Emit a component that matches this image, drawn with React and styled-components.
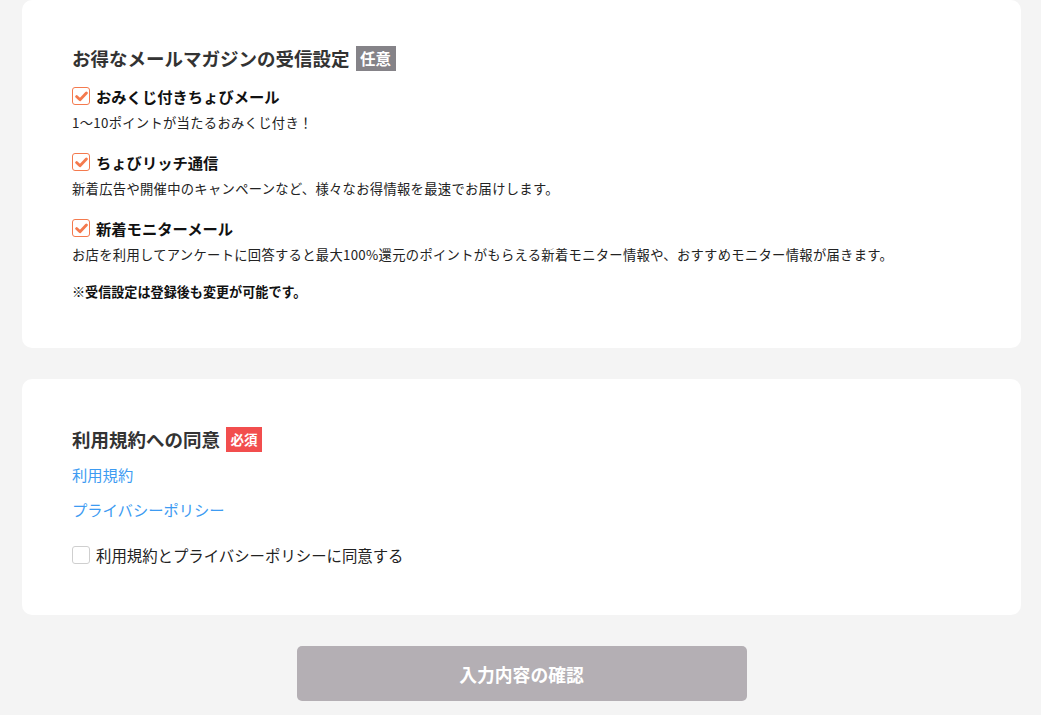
import React from 'react';
import styled, { createGlobalStyle } from 'styled-components';

const GlobalStyle = createGlobalStyle`
  body {
    margin: 0;
    background: #f4f4f4;
    font-family: "Noto Sans CJK JP", "Noto Sans", sans-serif;
    color: #222;
  }
`;

const mailItems = [
  { label: 'おみくじ付きちょびメール', desc: '1〜10ポイントが当たるおみくじ付き！' },
  { label: 'ちょびリッチ通信', desc: '新着広告や開催中のキャンペーンなど、様々なお得情報を最速でお届けします。' },
  {
    label: '新着モニターメール',
    desc: 'お店を利用してアンケートに回答すると最大100%還元のポイントがもらえる新着モニター情報や、おすすめモニター情報が届きます。',
  },
];

const CheckBox = ({ checked }) => (
  <Box $checked={checked}>
    {checked && (
      <svg width="13" height="11" viewBox="0 0 13 11">
        <path d="M1.6 5.6 L5 8.8 L11.4 2" fill="none" stroke="#f47a4e" strokeWidth="2.8" strokeLinecap="round" strokeLinejoin="round" />
      </svg>
    )}
  </Box>
);

const App = () => {
  return (
    <Page>
      <GlobalStyle />
      <Card $top={45} $bottom={46}>
        <Title>
          お得なメールマガジンの受信設定
          <Badge $color="#858388" $size={15.5}>任意</Badge>
        </Title>
        {mailItems.map((item, i) => (
          <Item key={i} $first={i === 0}>
            <CheckRow>
              <CheckBox checked />
              <ItemLabel>{item.label}</ItemLabel>
            </CheckRow>
            <Desc>{item.desc}</Desc>
          </Item>
        ))}
        <Note>※受信設定は登録後も変更が可能です。</Note>
      </Card>

      <Card $top={47} $bottom={51} $gap={31}>
        <Title>
          利用規約への同意
          <Badge $color="#f24e4e" $size={13.5}>必須</Badge>
        </Title>
        <Links>
          <LinkText href="#">利用規約</LinkText>
          <LinkText href="#">プライバシーポリシー</LinkText>
        </Links>
        <AgreeRow>
          <CheckBox checked={false} />
          <AgreeLabel>利用規約とプライバシーポリシーに同意する</AgreeLabel>
        </AgreeRow>
      </Card>

      <SubmitButton type="button">入力内容の確認</SubmitButton>
    </Page>
  );
};

const Page = styled.div`
  width: 999px;
  margin-left: 22px;
  padding-bottom: 15px;
  display: flex;
  flex-direction: column;
`;

const Card = styled.section`
  background: #fff;
  border-radius: 10px;
  margin-top: ${(p) => p.$gap || 0}px;
  padding: ${(p) => p.$top}px 50px ${(p) => p.$bottom}px;
`;

const Title = styled.h2`
  margin: 0;
  height: 26px;
  display: flex;
  align-items: center;
  font-size: 18.5px;
  font-weight: 700;
  color: #333;
  line-height: 26px;
`;

const Badge = styled.span`
  display: inline-flex;
  align-items: center;
  justify-content: center;
  height: 25px;
  padding: 0 4.5px;
  margin-left: 6px;
  background: ${(p) => p.$color};
  color: #fff;
  font-size: ${(p) => p.$size}px;
  font-weight: 700;
`;

const Item = styled.div`
  margin-top: ${(p) => (p.$first ? 16 : 20)}px;
`;

const CheckRow = styled.div`
  display: flex;
  align-items: center;
  height: 18px;
`;

const Box = styled.span`
  box-sizing: border-box;
  width: 18px;
  height: 18px;
  flex-shrink: 0;
  border-radius: 3px;
  border: 1.5px solid ${(p) => (p.$checked ? '#f47a4e' : '#cfcfcf')};
  background: #fff;
  display: flex;
  align-items: center;
  justify-content: center;
`;

const ItemLabel = styled.span`
  margin-left: 6px;
  font-size: 15.3px;
  font-weight: 700;
  color: #111;
`;

const Desc = styled.p`
  margin: 8px 0 0;
  font-size: 13.3px;
  letter-spacing: 0.3px;
  line-height: 20px;
  color: #222;
`;

const Note = styled.p`
  margin: 17px 0 0;
  font-size: 13.1px;
  font-weight: 700;
  line-height: 20px;
  color: #111;
`;

const Links = styled.div`
  display: flex;
  flex-direction: column;
  align-items: flex-start;
  gap: 15px;
  margin-top: 12px;
`;

const LinkText = styled.a`
  font-size: 15.3px;
  line-height: 20px;
  color: #3d9bf2;
  text-decoration: none;
`;

const AgreeRow = styled.label`
  display: flex;
  align-items: center;
  height: 18px;
  margin-top: 27px;
`;

const AgreeLabel = styled.span`
  margin-left: 6px;
  font-size: 15.4px;
  color: #222;
`;

const SubmitButton = styled.button`
  align-self: center;
  width: 450px;
  height: 55px;
  margin-top: 31px;
  border: none;
  border-radius: 5px;
  background: #b4afb4;
  color: #fff;
  font-family: inherit;
  font-size: 17.8px;
  font-weight: 700;
`;

export default App;
